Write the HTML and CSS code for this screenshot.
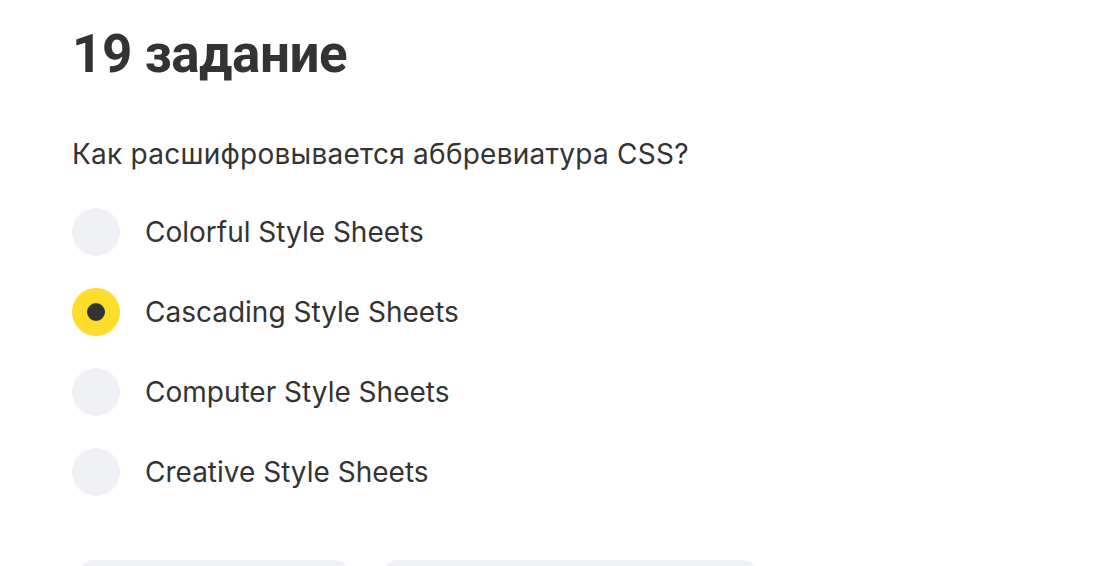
FILE: index.html
```html
<!DOCTYPE html>
<html lang="ru">
<head>
<meta charset="utf-8">
<title>19 задание</title>
<link rel="stylesheet" href="styles.css">
</head>
<body>
<main class="task">
  <h1 class="task-title">19 задание</h1>
  <p class="task-question">Как расшифровывается аббревиатура CSS?</p>
  <ul class="options">
    <li class="option"><span class="radio"></span><span class="option-label">Colorful Style Sheets</span></li>
    <li class="option"><span class="radio radio-checked"></span><span class="option-label">Cascading Style Sheets</span></li>
    <li class="option"><span class="radio"></span><span class="option-label">Computer Style Sheets</span></li>
    <li class="option"><span class="radio"></span><span class="option-label">Creative Style Sheets</span></li>
  </ul>
  <div class="actions">
    <button class="btn btn-first" type="button"></button>
    <button class="btn btn-second" type="button"></button>
  </div>
</main>
</body>
</html>
```

FILE: styles.css
```css
html, body {
  margin: 0;
  background: #ffffff;
}
body {
  font-family: Inter, Roboto, "Noto Sans", Arial, sans-serif;
  color: #333333;
  overflow: hidden;
}
.task {
  padding: 0 72px;
}
.task-title {
  margin: 0;
  padding-top: 22px;
  font-family: Roboto, Inter, Arial, sans-serif;
  font-size: 53px;
  line-height: 64px;
  font-weight: 700;
  letter-spacing: -0.5px;
}
.task-question {
  margin: 0;
  margin-top: 50px;
  font-size: 28px;
  line-height: 36px;
  letter-spacing: 0.25px;
}
.options {
  list-style: none;
  margin: 36px 0 0;
  padding: 0;
  display: flex;
  flex-direction: column;
  gap: 32px;
}
.option {
  display: flex;
  align-items: center;
  gap: 25px;
  height: 48px;
}
.radio {
  width: 48px;
  height: 48px;
  border-radius: 50%;
  background: #eff0f3;
  display: flex;
  align-items: center;
  justify-content: center;
  flex: none;
}
.radio-checked {
  background: #ffdd2d;
}
.radio-checked::after {
  content: "";
  width: 18px;
  height: 18px;
  border-radius: 50%;
  background: #333333;
}
.option-label {
  font-size: 28px;
  line-height: 36px;
}
.actions {
  display: flex;
  gap: 32px;
  margin-top: 64px;
  padding-left: 6px;
}
.btn {
  border: 0;
  background: #f0f1f4;
  border-radius: 16px;
  height: 56px;
}
.btn-first {
  width: 272px;
}
.btn-second {
  width: 376px;
}
```
